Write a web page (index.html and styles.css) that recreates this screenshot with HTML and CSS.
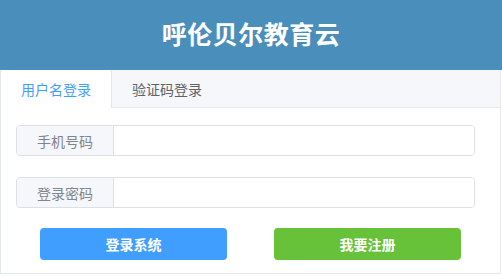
FILE: index.html
```html
<!DOCTYPE html>
<html>
<head>
    <meta charset="utf-8">
    <title>呼伦贝尔教育云</title>
    <link rel="stylesheet" href="styles.css">
</head>
<body>
    <div class="header">
        <h1>呼伦贝尔教育云</h1>
    </div>
    <div class="card">
        <div class="tabs">
            <div class="tab active">用户名登录</div>
            <div class="tab">验证码登录</div>
        </div>
        <div class="form">
            <div class="input-group">
                <div class="prepend">手机号码</div>
                <input class="input" type="text">
            </div>
            <div class="input-group">
                <div class="prepend">登录密码</div>
                <input class="input" type="password">
            </div>
            <div class="actions">
                <button class="btn btn-primary">登录系统</button>
                <button class="btn btn-success">我要注册</button>
            </div>
        </div>
    </div>
</body>
</html>
```
FILE: styles.css
```css
body {
    margin: 0;
    font-family: "Noto Sans CJK SC", "Noto Sans", sans-serif;
    background: #fff;
}
.header {
    background: #4a8fbc;
    height: 70px;
    display: flex;
    align-items: center;
    justify-content: center;
}
.header h1 {
    margin: 0 0 4px 0;
    color: #fff;
    font-size: 25px;
    font-weight: bold;
    letter-spacing: 0.5px;
}
.card {
    width: 499px;
    height: 203px;
    border: 1px solid #e4e7ed;
    border-top: none;
}
.tabs {
    display: flex;
    height: 37px;
    background: #f5f7fa;
    border-bottom: 1px solid #e4e7ed;
}
.tab {
    width: 110px;
    display: flex;
    align-items: center;
    justify-content: center;
    font-size: 14px;
    color: #606266;
}
.tab.active {
    background: #fff;
    color: #409eff;
    height: 38px;
    border-right: 1px solid #e4e7ed;
}
.form {
    padding: 17px 25px 0 15px;
}
.input-group {
    display: flex;
    height: 29px;
    border: 1px solid #dcdfe6;
    border-radius: 4px;
    margin-bottom: 21px;
    overflow: hidden;
}
.prepend {
    width: 96px;
    background: #f5f7fa;
    border-right: 1px solid #dcdfe6;
    color: #80848c;
    font-size: 14px;
    display: flex;
    align-items: center;
    justify-content: center;
}
.input {
    flex: 1;
    border: none;
    outline: none;
    padding: 0 15px;
}
.actions {
    display: flex;
    gap: 47px;
    padding-left: 24px;
    margin-top: -1px;
}
.btn {
    width: 187px;
    height: 32px;
    border: none;
    border-radius: 4px;
    color: #fff;
    font-family: inherit;
    font-size: 14px;
    font-weight: bold;
    cursor: pointer;
}
.btn-primary { background: #409eff; }
.btn-success { background: #67c23a; }
```
